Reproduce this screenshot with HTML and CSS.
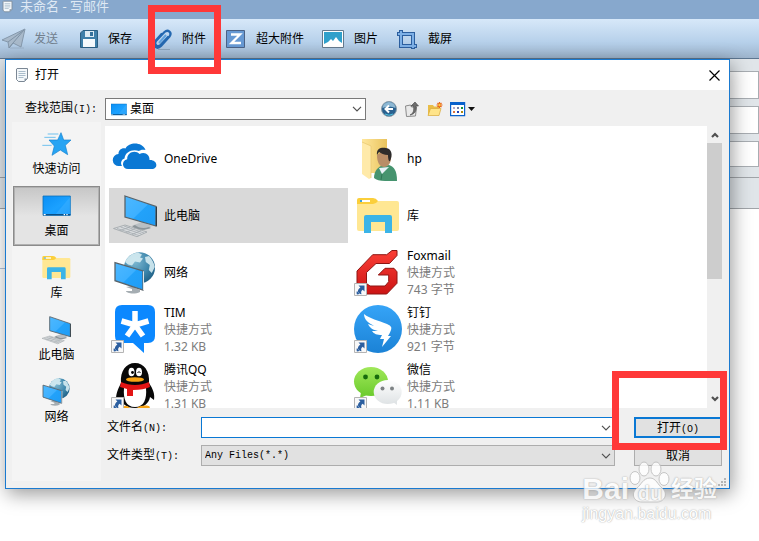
FILE: index.html
```html
<!DOCTYPE html>
<html lang="zh-CN">
<head>
    <meta charset="utf-8">
    <meta name="viewport" content="width=device-width, initial-scale=1">
    <title>未命名 - 写邮件</title>
    <link rel="stylesheet" href="styles.css">
</head>
<body>

<!-- shared icons -->
<svg class="defs" width="0" height="0">
    <defs>
        <linearGradient id="screen" x1="0" y1="0" x2="1" y2="1">
            <stop offset="0" stop-color="#4db8ff"/><stop offset=".5" stop-color="#3db0ff"/><stop offset=".52" stop-color="#22a2fa"/><stop offset="1" stop-color="#1f9cf5"/>
        </linearGradient>
        <linearGradient id="desk" x1="0" y1="0" x2="1" y2="1">
            <stop offset="0" stop-color="#0a8ff5"/><stop offset=".55" stop-color="#1ba1ff"/><stop offset="1" stop-color="#0c93f8"/>
        </linearGradient>
        <radialGradient id="globe" cx=".35" cy=".3" r=".8">
            <stop offset="0" stop-color="#7fb9d2"/><stop offset=".6" stop-color="#3d86ab"/><stop offset="1" stop-color="#1c5b80"/>
        </radialGradient>
        <linearGradient id="red" x1="0" y1="0" x2="0" y2="1">
            <stop offset="0" stop-color="#fb3f36"/><stop offset="1" stop-color="#cc1414"/>
        </linearGradient>
        <linearGradient id="ding" x1="0" y1="0" x2="0" y2="1">
            <stop offset="0" stop-color="#36a4f7"/><stop offset="1" stop-color="#1b82d6"/>
        </linearGradient>
        <linearGradient id="green" x1="0" y1="0" x2="0" y2="1">
            <stop offset="0" stop-color="#a0e85a"/><stop offset="1" stop-color="#6ccb2e"/>
        </linearGradient>
        <linearGradient id="grey" x1="0" y1="0" x2="0" y2="1">
            <stop offset="0" stop-color="#fff"/><stop offset="1" stop-color="#dfe3e5"/>
        </linearGradient>
        <linearGradient id="folder" x1="0" y1="0" x2="1" y2="0">
            <stop offset="0" stop-color="#ffe79c"/><stop offset="1" stop-color="#e9c35d"/>
        </linearGradient>
    </defs>
    <symbol id="i-note" viewBox="0 0 16 16">
        <path d="M3 1.500h10.500v10l-3 3H4.500l-2-2V2z" fill="#f4f8fb" stroke="#7b8794"/>
        <path d="M4.500 4.500h7M4.500 6.500h7M4.500 8.500h7M4.500 10.500h5" stroke="#a9bccb"/>
        <path d="M13.500 11.500h-3v3z" fill="#8795a3"/>
    </symbol>
    <symbol id="i-shortcut" viewBox="0 0 13 13">
        <path d="M.5.5h12v12H.5z" fill="#f8f8f8" stroke="#b4b4b4"/>
        <path d="M4.500 2.500h6V8.500L8.700 6.700C7 8 6.800 9.300 7.600 11.300 3.500 10.500 2.600 7 6.400 4.400z" fill="#2b5e9f"/>
        <path d="M3 11.500c-.6-1-.5-2.500 0-3.500l2.500 3z" fill="#2b5e9f"/>
    </symbol>
    <symbol id="i-onedrive" viewBox="0 0 48 48">
        <path d="M10 31H7a6 6 0 0 1-.5-12c-.2-4 3.500-6.600 7-5.500C17 7 30 6.500 33.500 15c-3.500-.8-5 0-6.500 1-6-2.500-14 .5-14.500 7.500-3 .8-4.500 4.500-2.500 7.500z" fill="#0a78d4"/>
        <path d="M16 34c-6 0-7-8.500-.8-9.800C15 17 23.500 14.500 27.500 19c5-3 10.500.5 10 6 8-.5 9.500 9 2 9z" fill="#0a78d4"/>
    </symbol>
    <symbol id="i-pc" viewBox="0 0 48 48">
        <path d="M22 33l8-3 10 4-8 4c-5-.5-9-2-10-5z" fill="#b9bfc3"/>
        <path d="M20 34c3 4 12 5 19 2l-2-1c-5 2-11 1-14-2z" fill="#8b9499"/>
        <path d="M13 4l31 10.500V34L13 25z" fill="url(#screen)" stroke="#59646b" stroke-width="1.300"/>
        <path d="M44 14.500l1 .6V34l-1.200.6z" fill="#303a40"/>
        <path d="M1.500 36.500L13 33l22 7-10 4.700z" fill="#d9dcde" stroke="#9ea4a8" stroke-width=".8"/>
        <path d="M5 36.500l22 7M8.500 35l21 7M12 34l20 7M8 38.500L18 35M14 40.500l9-4M20 42.500l9-4" stroke="#a4abb0" stroke-width=".8" fill="none"/>
    </symbol>
    <symbol id="i-network" viewBox="0 0 48 48">
        <circle cx="27.500" cy="18.700" r="15.500" fill="url(#globe)"/>
        <path d="M13 13c3-6 8-9 13-9.500l4 2-2 3 3 1-3 4-5-1-3 4-4-1zM33 8l4-1c3 3 5 7 5.800 11l-3 6-3-3 1-5-4-3z" fill="#d6ecf2" opacity=".9"/>
        <path d="M14 38l6 2v2l-6 0c0 2 8 4 14 1v-2l-5-2-3-2z" fill="#a5adb2"/>
        <path d="M3 13.700L31 22v19L3 31.700z" fill="url(#screen)" stroke="#59646b" stroke-width="1.300"/>
        <path d="M31 22l1 .4V41l-1 .5z" fill="#dfe4e6"/>
    </symbol>
    <symbol id="i-user" viewBox="0 0 48 48">
        <path d="M7 4h25v34H16L7 39z" fill="url(#folder)"/>
        <path d="M7 7l9 4v32l-2 1-7-5z" fill="#ffeaa9"/>
        <path d="M7 7l9 4v32" fill="none" stroke="#e7c66d" stroke-width=".7"/>
        <path d="M19 43c0-6 3-10 7-12l8-1c5 2 8 5 8 16H30c-5 0-9-1-11-3z" fill="#46946f"/>
        <path d="M24 33l3 6 7-7" fill="#e8f1f6"/>
        <path d="M27 39l-1 6" stroke="#2f7656"/>
        <path d="M22 20c0 8 3 12 7 12 5 0 8-6 7-13l-7-4z" fill="#b98d67"/>
        <path d="M22 20c-1-7 5-8 9-7 6 1 7 7 4 13-1 1-2-2-2-6-4 0-7-2-9-3z" fill="#2d2b2b"/>
    </symbol>
    <symbol id="i-library" viewBox="0 0 48 48">
        <path d="M2 9h40q2 0 2 2v26q0 2-2 2H4q-2 0-2-2z" fill="#ffe793"/>
        <path d="M2 8q0-2 2-2h14q3 0 5 3-2 3-5 3H2z" fill="#fbcf3b"/>
        <path d="M5 8h10v2H5z" fill="#fff"/><path d="M5 8h2v2H5z" fill="#3aa0dc"/>
        <path d="M9 41V25q0-2 2-2h24q2 0 2 2v16h-7V30H16v11z" fill="#3bb4e7"/>
    </symbol>
    <symbol id="i-foxmail" viewBox="0 0 48 48">
        <path d="M37 1.500h5v5L34.500 14.500H21l-9.500 9v11L15 37h15l3.700-4.300V26H23.300l6.700-6.700h9l3 3.500v11.500L31.700 45H10L2 38V22L17.700 5.700h14z" fill="url(#red)" stroke="#8e1512" stroke-width="1"/>
    </symbol>
    <symbol id="i-tim" viewBox="0 0 48 48">
        <path d="M10-1h26q7 0 7 7v24q0 7-7 7h-4v10L21 37H10q-7 0-7-7V6q0-7 7-7z" fill="#0b88ff"/>
        <path d="M23 5v14M23 19L9.500 15M23 19l13.500-4M23 19l-8 11M23 19l8 11" stroke="#fff" stroke-width="5.500" fill="none"/>
    </symbol>
    <symbol id="i-qq" viewBox="0 0 48 48">
        <path d="M9 20C8 8 14 0 23 0s15 8 14 20c4 6 6 11 5 17l-4-3c-1 6-6 11-15 11S9 40 8 34l-4 3c0-7 2-11 5-17z" fill="#080808"/>
        <path d="M12 25c-1 11 2 19 11 19s12-8 11-19z" fill="#fff"/>
        <path d="M9 19c9 4 19 4 28 0l1 5c-4 2-10 3-17 3v6h-6v-7l-7-2z" fill="#e31414"/>
        <ellipse cx="19.500" cy="9" rx="3" ry="4.300" fill="#fff"/><ellipse cx="27" cy="9" rx="3" ry="4.300" fill="#fff"/>
        <circle cx="20.500" cy="9.500" r="1.400"/><path d="M25.500 10q1.500-3 3 0" fill="none" stroke="#000"/>
        <ellipse cx="23" cy="16.500" rx="9" ry="2.300" fill="#f9a414"/>
        <path d="M10 45c1-3 5-3 8 0zM25 45c4-3 11-3 13-1l-1 2z" fill="#f9a414"/>
    </symbol>
    <symbol id="i-ding" viewBox="0 0 48 48">
        <circle cx="23" cy="23" r="24" fill="url(#ding)"/>
        <path d="M9 8c6 5 14 6 23 10 4 2 5 3 4 6-1 3-3 6-3 6h3L27 41l2-8h-4l2-4c-5 0-8-1-10-4l6 0c-5-1-8-3-10-7l6 2c-5-3-10-6-10-12z" fill="#fff"/>
    </symbol>
    <symbol id="i-wechat" viewBox="0 0 48 48">
        <ellipse cx="16" cy="18.500" rx="17" ry="14.500" fill="url(#green)"/>
        <path d="M6 29l-1 6 7-3z" fill="#70cd31"/>
        <circle cx="10.500" cy="14" r="2.400" fill="#176b0d"/><circle cx="22" cy="14" r="2.400" fill="#176b0d"/>
        <ellipse cx="32.700" cy="29" rx="14" ry="12" fill="url(#grey)"/>
        <path d="M38 39l4 3v-5z" fill="#e0e4e6"/>
        <circle cx="27.500" cy="25.500" r="2" fill="#7d8284"/><circle cx="37" cy="25.500" r="2" fill="#7d8284"/>
    </symbol>
    <symbol id="i-desktop" viewBox="0 0 48 48">
        <path d="M3 9h41v29H3z" fill="url(#desk)" stroke="#0c6fb8" stroke-width="1.200"/>
        <path d="M22 36L44 10v26z" fill="#3fb1ff" opacity=".5"/>
        <path d="M3 36h41v2H3z" fill="#0a4f86"/>
        <path d="M4 36h3v2H4zM34 36h2v2h-2zM38 36h2v2h-2z" fill="#fff"/>
    </symbol>
    <symbol id="i-star" viewBox="0 0 48 48">
        <path d="M30 7l4 11h11L36.500 26 40 40l-11-7-12.500 8L20 27l-8-9h13z" fill="#27a4f3" stroke="#1480cf"/>
        <path d="M10 9h16M5 14h17M2 26h14" stroke="#6fc1ee" stroke-width="1.500"/>
    </symbol>
    <symbol id="i-chevron" viewBox="0 0 10 6">
        <path d="M1 .8l4 4 4-4" fill="none" stroke="#505050" stroke-width="1.200"/>
    </symbol>
    <symbol id="i-arrow" viewBox="0 0 8 6">
        <path d="M1 1l3 3 3-3" fill="none" stroke="#505050" stroke-width="2.200"/>
    </symbol>
</svg>

<div class="mail">
    <div class="mail-title">
        <svg class="icon16"><use href="#i-note"/></svg>
        <span>未命名 - 写邮件</span>
    </div>

    <div class="toolbar">
        <button class="tool" disabled>
            <svg viewBox="0 0 24 24"><path d="M0 13L23 2l-4 18-8-4-4 5-1-6z" fill="#a8b9ca" stroke="#8598ab"/><path d="M6 15L22 3 11 16M7 21l4-5" fill="none" stroke="#7f93a6"/><path d="M8 21h14" stroke="#8fa4ba" opacity=".6"/></svg>
            发送
        </button>
        <button class="tool">
            <svg viewBox="0 0 24 24"><path d="M7 3.500h14.500v17h-17V6z" fill="#3e7fa9" stroke="#2b5f83"/><path d="M9 4h9v6H9z" fill="#dcebf4"/><path d="M14 5h3v4h-3z" fill="#34719b"/><path d="M7 12h12v8H7z" fill="#f5fafd"/></svg>
            保存
        </button>
        <button class="tool">
            <svg viewBox="0 0 24 24"><path d="M18.500 9.500l-8 8.500c-3 3-7-1-4.500-4L14.500 5c3.500-3 8 .5 5 4.500L11 19c-4 4-9 0-6-4.500l7-8" fill="none" stroke="#2468b0" stroke-width="2.200"/><path d="M16 8l-7 8" stroke="#5fa2dd" stroke-width="2" fill="none"/><path d="M8 22.500h12" stroke="#8ba3bb"/></svg>
            附件
        </button>
        <button class="tool">
            <svg viewBox="0 0 24 24"><path d="M2.500 3.500h18v17h-18z" fill="#6699d3" stroke="#4a6286"/><path d="M7 7.500h9L7.500 16H17" fill="none" stroke="#fff" stroke-width="2.300"/></svg>
            超大附件
        </button>
        <button class="tool">
            <svg viewBox="0 0 24 24"><path d="M.5 3.500h21v17H.5z" fill="#fff" stroke="#64798d"/><path d="M2 5h18v14H2z" fill="#2fa0cb"/><path d="M2 17l4-2 3-3 2 2 3-4 3 4 3 2v3H2z" fill="#fff"/></svg>
            图片
        </button>
        <button class="tool">
            <svg viewBox="0 0 24 24"><path d="M5 3v16h16M1 7h16v15" fill="none" stroke="#2c5f9f" stroke-width="4"/><path d="M5 4v15h15M2 7h15v14" fill="none" stroke="#7db0e6" stroke-width="2"/></svg>
            截屏
        </button>
    </div>

    <div class="compose">
        <div class="field"></div>
        <div class="field"></div>
        <div class="field subject"></div>
        <div class="format"></div>
        <div class="paper"></div>
    </div>
</div>

<div class="dialog" role="dialog" aria-labelledby="dialog-title">
    <div class="dialog-title">
        <svg class="icon16"><use href="#i-note"/></svg>
        <span id="dialog-title">打开</span>
        <button class="close" aria-label="关闭">
            <svg viewBox="0 0 11 11"><path d="M.5.5l10 10M10.500.5l-10 10" stroke="#000" stroke-width="1.200"/></svg>
        </button>
    </div>

    <div class="dialog-body">
        <label class="look-label" for="look">查找范围<span class="mono">(I):</span></label>
        <div class="look">
            <div class="combo look-combo">
                <svg class="combo-icon" viewBox="3 8 42 31"><use href="#i-desktop" width="48" height="48"/></svg>
                <select id="look"><option>桌面</option></select>
                <svg class="chevron"><use href="#i-chevron"/></svg>
            </div>
            <button class="nav" aria-label="后退">
                <svg viewBox="0 0 16 16"><circle cx="8" cy="8" r="7.500" fill="#2a618f" stroke="#8a9daa"/><path d="M1.500 7a6.500 6 0 0 1 13 0q-6-3-13 0z" fill="#8db8d4"/><path d="M12 8H5M8 4.500L4.500 8 8 11.500" fill="none" stroke="#fff" stroke-width="2"/><path d="M4 13q4 2.500 8 0" stroke="#4fc3e0" fill="none"/></svg>
            </button>
            <button class="nav" aria-label="向上">
                <svg viewBox="0 0 16 16"><path d="M1.500 5l5-1 1 2h5l-1 9-9 .500z" fill="#e9e9e9" stroke="#8a8a8a"/><path d="M6 14c4-2 4-5 3.500-9H7l4-4 3.500 4H12c.5 5-1 8-6 9z" fill="#6e6e6e" stroke="#444" stroke-width=".6"/></svg>
            </button>
            <button class="nav" aria-label="新建文件夹">
                <svg viewBox="0 0 16 16"><path d="M1 4h5l1 1.500h5V14H1z" fill="#e9bd48"/><path d="M3.500 7.500H14L12 14.500H1z" fill="#ffe48a" stroke="#d9a93a" stroke-width=".7"/><path d="M12.500 1v6M9.500 4h6M10.500 2l4 4M14.500 2l-4 4" stroke="#e8641b" stroke-width="1.200"/><circle cx="12.500" cy="4" r="1.200" fill="#ffd03c"/></svg>
            </button>
            <button class="nav nav-view" aria-label="查看">
                <svg viewBox="0 0 26 16"><path d="M.6 1.600h14v13H.6z" fill="#fff" stroke="#0a62cc" stroke-width="1.200"/><path d="M0 1h15v3H0z" fill="#0a62cc"/><path d="M3 6h2v2H3z" fill="#b3a8c8"/><path d="M7 6h2v2H7z" fill="#7580a8"/><path d="M11 6h2v2h-2z" fill="#13913a"/><path d="M3 10h2v2H3z" fill="#e0743c"/><path d="M7 10h2v2H7z" fill="#2240b4"/><path d="M11 10h2v2h-2z" fill="#b08a10"/><path d="M18 6h7l-3.500 4z" fill="#111"/></svg>
            </button>
        </div>

        <div class="places">
            <button class="place"><svg><use href="#i-star"/></svg>快速访问</button>
            <button class="place active"><svg><use href="#i-desktop"/></svg>桌面</button>
            <button class="place"><svg><use href="#i-library"/></svg>库</button>
            <button class="place"><svg><use href="#i-pc"/></svg>此电脑</button>
            <button class="place"><svg><use href="#i-network"/></svg>网络</button>
        </div>

        <div class="browser">
            <ul class="files">
                <li class="file"><svg><use href="#i-onedrive"/></svg><div>OneDrive</div></li>
                <li class="file"><svg><use href="#i-user"/></svg><div>hp</div></li>
                <li class="file selected"><svg><use href="#i-pc"/></svg><div>此电脑</div></li>
                <li class="file"><svg><use href="#i-library"/></svg><div>库</div></li>
                <li class="file"><svg><use href="#i-network"/></svg><div>网络</div></li>
                <li class="file">
                    <svg><use href="#i-foxmail"/><use href="#i-shortcut" x="-1" y="34" width="13" height="13"/></svg>
                    <div>Foxmail<small>快捷方式</small><small>743 字节</small></div>
                </li>
                <li class="file">
                    <svg><use href="#i-tim"/><use href="#i-shortcut" x="-1" y="34" width="13" height="13"/></svg>
                    <div>TIM<small>快捷方式</small><small>1.32 KB</small></div>
                </li>
                <li class="file">
                    <svg><use href="#i-ding"/><use href="#i-shortcut" x="-1" y="34" width="13" height="13"/></svg>
                    <div>钉钉<small>快捷方式</small><small>921 字节</small></div>
                </li>
                <li class="file">
                    <svg><use href="#i-qq"/><use href="#i-shortcut" x="-1" y="34" width="13" height="13"/></svg>
                    <div>腾讯QQ<small>快捷方式</small><small>1.31 KB</small></div>
                </li>
                <li class="file">
                    <svg><use href="#i-wechat"/><use href="#i-shortcut" x="-1" y="34" width="13" height="13"/></svg>
                    <div>微信<small>快捷方式</small><small>1.11 KB</small></div>
                </li>
            </ul>
            <div class="scrollbar">
                <svg class="up"><use href="#i-arrow"/></svg>
                <div class="thumb"></div>
                <svg class="down"><use href="#i-arrow"/></svg>
            </div>
        </div>

        <form class="bottom" onsubmit="return false">
            <label for="name">文件名<span class="mono">(N):</span></label>
            <div class="combo name-combo">
                <input id="name" type="text">
                <svg class="chevron"><use href="#i-chevron"/></svg>
            </div>
            <button class="btn primary" type="submit">打开<span class="mono">(O)</span></button>

            <label for="type">文件类型<span class="mono">(T):</span></label>
            <div class="combo type-combo">
                <select id="type" class="mono"><option>Any Files(*.*)</option></select>
                <svg class="chevron"><use href="#i-chevron"/></svg>
            </div>
            <button class="btn" type="button">取消</button>
        </form>
    </div>
    <svg class="grip" viewBox="0 0 8 8"><path d="M6 0h2v2H6zM3 3h2v2H3zM6 3h2v2H6zM0 6h2v2H0zM3 6h2v2H3zM6 6h2v2H6z" fill="#b5b5b5"/></svg>
</div>

<div class="mark mark-attach"></div>
<div class="mark mark-open"></div>

<div class="watermark">
    <div class="brand">
        <span>Bai</span>
        <span class="paw">
            <svg viewBox="0 0 42 42"><g fill="#fff" stroke="#bbb"><ellipse cx="6" cy="17" rx="5" ry="6.500"/><ellipse cx="15" cy="8" rx="5" ry="7"/><ellipse cx="27" cy="8" rx="5" ry="7"/><ellipse cx="35" cy="18" rx="5" ry="6.500"/><path d="M21 17c6 0 8 7 12 10 7 6 2 14-5 14H13c-8 0-12-8-5-14 4-3 6-10 13-10z"/></g></svg>
            <span>du</span>
        </span>
        <span class="cn">经验</span>
    </div>
    <div class="url">jingyan.baidu.com</div>
</div>

</body>
</html>
```
FILE: styles.css
```css
* {
    box-sizing: border-box;
}

body {
    margin: 0;
    min-height: 100vh;
    position: relative;
    overflow: hidden;
    background: #fff;
    color: #000;
    font: 12px/16px "Noto Sans", "Noto Sans CJK SC", sans-serif;
}

button, input, select {
    margin: 0;
    padding: 0;
    border: 0;
    background: none;
    color: inherit;
    font: inherit;
}

svg {
    display: block;
    flex: none;
}

symbol {
    overflow: visible;
}

.defs {
    position: absolute;
}

.icon16 {
    width: 16px;
    height: 16px;
}

.mono {
    font-family: "Liberation Mono", monospace;
    font-size: 10px;
}

/* mail window behind the dialog */

.mail-title {
    display: flex;
    gap: 5px;
    height: 19px;
    background: #87a8cd;
    color: #dfe9f4;
    font-size: 13px;
    line-height: 13px;
}

.mail-title .icon16 {
    width: 15px;
    height: 13px;
}

.toolbar {
    display: flex;
    align-items: center;
    gap: 18px;
    height: 40px;
    padding: 0 2px;
    background: linear-gradient(#d7e8f9, #b6d0ea 60%, #9db4cc);
    border-bottom: 1px solid #5d7690;
}

.tool {
    display: flex;
    align-items: center;
    gap: 8px;
}

.tool svg {
    width: 24px;
    height: 24px;
}

.tool:disabled {
    color: #72808e;
}

.compose {
    background: #e0e5e9;
    padding-top: 12px;
}

.field {
    height: 28px;
    margin: 0 0 7px 200px;
    background: #fff;
    border: 1px solid #a8adb2;
}

.subject {
    height: 26px;
}

.format {
    height: 32px;
    margin-top: 10px;
    border: solid #a0a4a8;
    border-width: 1px 0;
}

.paper {
    height: 60px;
    background: #fff;
    border-bottom: 1px solid;
    border-image: linear-gradient(90deg, #b3c3dc 20px, #fff 20px) 1;
}

/* open dialog */

.dialog {
    position: absolute;
    top: 59px;
    left: 5px;
    right: 29px;
    background: #f0f0f0;
    border: 1px solid #1a7ad0;
    box-shadow: 2px 5px 18px rgba(0, 0, 0, .4);
}

.dialog-title {
    display: flex;
    align-items: center;
    gap: 5px;
    height: 30px;
    padding: 0 9px 0 8px;
    background: #fff;
}

.close {
    margin-left: auto;
}

.close svg {
    width: 11px;
    height: 11px;
}

.dialog-body {
    display: grid;
    grid-template-columns: 89px 1fr;
    grid-template-rows: 22px auto auto;
    column-gap: 4px;
    padding: 8px 7px 7px 6px;
}

.look-label {
    padding-right: 4px;
    text-align: right;
    line-height: 20px;
}

.look {
    display: flex;
    align-items: center;
    gap: 7px;
}

.look-combo {
    width: 261px;
    margin-right: 8px;
}

.combo {
    display: flex;
    align-items: center;
    position: relative;
    height: 22px;
    background: #fff;
    border: 1px solid #7a7a7a;
}

.combo select,
.combo input {
    appearance: none;
    flex: 1;
    min-width: 0;
    height: 100%;
    padding: 0 20px 0 3px;
    outline: 0;
}

.combo-icon {
    width: 16px;
    height: 13px;
    margin-left: 5px;
}

.chevron {
    position: absolute;
    right: 3px;
    width: 10px;
    height: 6px;
    pointer-events: none;
}

.nav svg {
    width: 16px;
    height: 16px;
}

.nav-view svg {
    width: 26px;
}

.places {
    grid-row: 2 / 4;
    display: flex;
    flex-direction: column;
    gap: 2px;
    margin-top: 2px;
    padding: 2px 1px;
    background: #f4f4f4;
}

.place {
    display: flex;
    flex-direction: column;
    align-items: center;
    gap: 1px;
    height: 60px;
    padding-top: 4px;
}

.place svg {
    width: 32px;
    height: 32px;
}

.place.active {
    padding-top: 3px;
    background: linear-gradient(#c6c6c6, #e4e4e4 50%);
    border: 1px solid #8b8b8b;
    box-shadow: inset 0 0 0 1px #b0b0b0;
}

.browser {
    display: flex;
    height: 282px;
    margin-top: 6px;
    background: #fff;
    overflow: hidden;
}

.files {
    flex: 1;
    display: grid;
    grid-template-columns: 239px 239px;
    grid-auto-rows: 55px;
    gap: 2px 4px;
    margin: 0;
    padding: 5px 4px 0;
    list-style: none;
}

.file {
    display: flex;
    align-items: center;
    gap: 4px;
    padding-left: 3px;
    line-height: 17px;
}

.file svg {
    width: 48px;
    height: 48px;
    overflow: visible;
}

.file small {
    display: block;
    color: #7c7c7c;
    font-size: 12px;
}

.file.selected {
    background: #d9d9d9;
}

.scrollbar {
    display: flex;
    flex-direction: column;
    align-items: center;
    width: 15px;
    padding: 6px 0;
    background: #f0f0f0;
}

.scrollbar svg {
    width: 8px;
    height: 6px;
}

.up {
    transform: rotate(180deg);
}

.down {
    margin-top: auto;
}

.thumb {
    width: 15px;
    height: 136px;
    margin-top: 5px;
    background: #cdcdcd;
}

.bottom {
    display: grid;
    grid-template-columns: 96px 1fr 88px;
    gap: 7px 0;
    align-items: center;
    padding: 9px 0 15px;
}

.bottom label {
    padding-left: 2px;
}

.bottom .combo {
    height: 21px;
    margin-right: 19px;
}

.name-combo {
    border-color: #0a78d4;
}

.type-combo {
    background: #e1e1e1;
    border-color: #adadad;
}

.btn {
    height: 21px;
    background: #e1e1e1;
    border: 1px solid #adadad;
    line-height: 17px;
}

.primary {
    border: 2px solid #0a78d4;
}

.grip {
    position: absolute;
    right: 3px;
    bottom: 2px;
    width: 8px;
    height: 8px;
}

/* red highlight boxes */

.mark {
    position: absolute;
    border: 7px solid #ff3838;
    pointer-events: none;
}

.mark-attach {
    top: 5px;
    left: 148px;
    width: 73px;
    height: 69px;
}

.mark-open {
    top: 371px;
    right: 32px;
    width: 115px;
    height: 79px;
}

.watermark {
    position: absolute;
    top: 459px;
    right: 42px;
    color: #fff;
    font-family: "Liberation Sans", "Noto Sans CJK SC", sans-serif;
    font-weight: bold;
    text-shadow: 0 0 1px #999, 0 0 2px #bbb;
    opacity: .8;
    pointer-events: none;
}

.brand {
    display: flex;
    align-items: flex-end;
    height: 44px;
    font-size: 30px;
    line-height: 28px;
}

.paw {
    display: grid;
    place-items: end center;
}

.paw svg,
.paw span {
    grid-area: 1 / 1;
}

.paw svg {
    width: 42px;
    height: 42px;
}

.paw span {
    font-size: 20px;
    line-height: 20px;
}

.cn {
    font-size: 23px;
}

.url {
    font-size: 16px;
    font-weight: normal;
    line-height: 22px;
}
```
